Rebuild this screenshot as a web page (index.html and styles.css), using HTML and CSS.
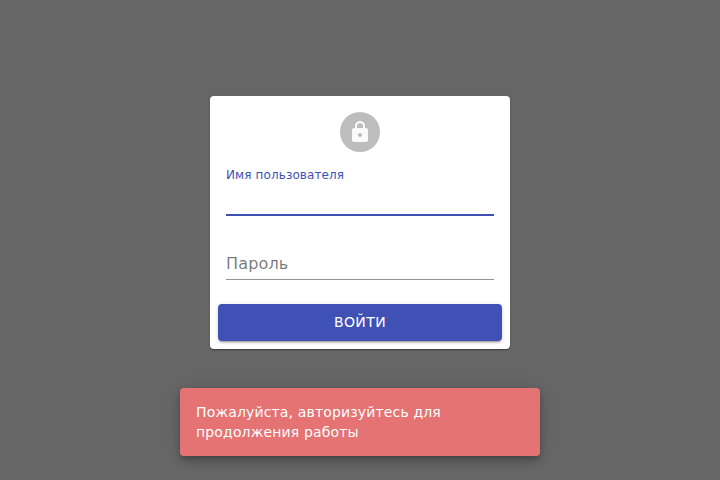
FILE: index.html
```html
<!DOCTYPE html>
<html lang="ru">
<head>
<meta charset="utf-8">
<title>Вход</title>
<link rel="stylesheet" href="styles.css">
</head>
<body>
<main class="page">
  <form class="card">
    <div class="avatar">
      <svg class="icon" viewBox="0 0 24 24" aria-hidden="true"><path d="M18 8h-1V6c0-2.760-2.240-5-5-5S7 3.240 7 6v2H6c-1.100 0-2 .9-2 2v10c0 1.100.9 2 2 2h12c1.100 0 2-.9 2-2V10c0-1.100-.9-2-2-2zm-6 9c-1.100 0-2-.9-2-2s.9-2 2-2 2 .9 2 2-.9 2-2 2zm3.100-9H8.900V6c0-1.710 1.390-3.100 3.100-3.100 1.710 0 3.100 1.390 3.100 3.100v2z"/></svg>
    </div>
    <div class="fields">
      <div class="field field-active"><label class="label">Имя пользователя</label></div>
      <div class="field"><label class="placeholder">Пароль</label></div>
    </div>
    <button class="submit" type="button">Войти</button>
  </form>
</main>
<div class="snackbar">Пожалуйста, авторизуйтесь для продолжения работы</div>
</body>
</html>
```
FILE: styles.css
```css
* { box-sizing: border-box; }
body {
  margin: 0;
  height: 480px;
  overflow: hidden;
  background: #666;
  font-family: "DejaVu Sans", sans-serif;
}
.page {
  display: flex;
  justify-content: center;
  padding-top: 96px;
}
.card {
  width: 300px;
  height: 253px;
  background: #fff;
  border-radius: 4px;
  box-shadow: 0 2px 1px -1px rgba(0,0,0,.2), 0 1px 1px rgba(0,0,0,.14), 0 1px 3px rgba(0,0,0,.12);
}
.avatar {
  display: flex;
  align-items: center;
  justify-content: center;
  width: 40px;
  height: 40px;
  margin: 16px auto 0;
  border-radius: 50%;
  background: #bdbdbd;
}
.icon { width: 24px; height: 24px; fill: #fafafa; }
.fields { padding: 16px 16px 0; }
.field {
  display: flex;
  align-items: flex-end;
  height: 48px;
  border-bottom: 1px solid rgba(0,0,0,.42);
}
.field + .field { margin-top: 16px; }
.field-active {
  align-items: flex-start;
  border-bottom: 2px solid #3f51b5;
}
.label {
  color: #3f51b5;
  font-size: 16px;
  line-height: 16px;
  letter-spacing: .15px;
  transform: translate(0, 1.5px) scale(.75);
  transform-origin: top left;
}
.placeholder {
  padding-bottom: 6px;
  color: rgba(0,0,0,.54);
  font-size: 16px;
  line-height: 19px;
  letter-spacing: .15px;
}
.submit {
  display: block;
  width: 284px;
  height: 37px;
  margin: 24px 8px 0;
  padding: 0 0 1px;
  border: 0;
  border-radius: 4px;
  background: #3f51b5;
  color: #fff;
  font: 14px/24px "DejaVu Sans", sans-serif;
  letter-spacing: .4px;
  text-transform: uppercase;
  box-shadow: 0 3px 1px -2px rgba(0,0,0,.2), 0 2px 2px rgba(0,0,0,.14), 0 1px 5px rgba(0,0,0,.12);
}
.snackbar {
  position: absolute;
  bottom: 24px;
  left: 180px;
  width: 360px;
  height: 68px;
  padding: 14px 16px;
  border-radius: 4px;
  background: #e57373;
  color: #fff;
  font-size: 14px;
  line-height: 20px;
  letter-spacing: .15px;
  box-shadow: 0 3px 5px -1px rgba(0,0,0,.2), 0 6px 10px rgba(0,0,0,.14), 0 1px 18px rgba(0,0,0,.12);
}
```
